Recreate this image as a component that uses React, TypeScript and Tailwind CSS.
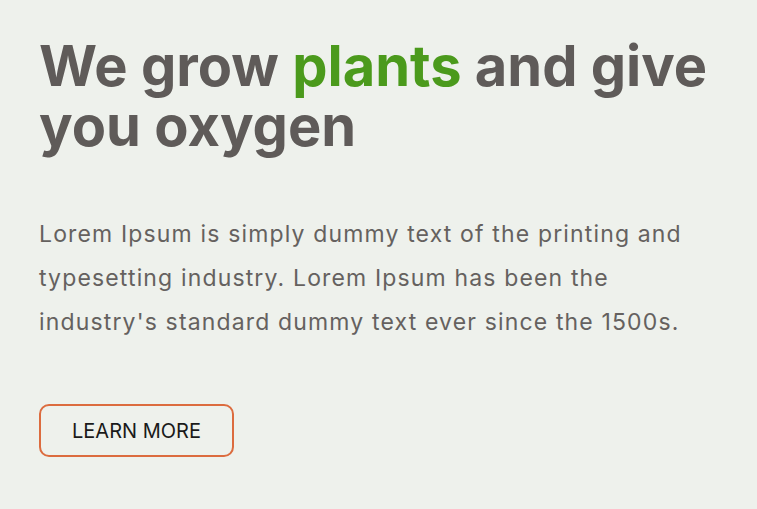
export default function App() {
  return (
    <div className="min-h-[509px] w-full bg-[#eef1ec] px-[39px] pt-[36px]" style={{ fontFamily: "Inter, 'Noto Sans', sans-serif" }}>
      <h1 className="text-[56px] font-bold leading-[60px] text-[#5f5b59]">
        We grow <span className="text-[#4b9a1c]">plants</span> and give you oxygen
      </h1>
      <p className="mt-[56px] max-w-[660px] text-[23px] leading-[44px] tracking-[1.15px] text-[#65615f]">
        Lorem Ipsum is simply dummy text of the printing and typesetting industry. Lorem Ipsum has been the industry's standard dummy text ever since the 1500s.
      </p>
      <button className="mt-[60px] h-[53px] w-[195px] rounded-[10px] border-2 border-[#dc6c3f] text-[20px] text-[#1a1a1a]">
        LEARN MORE
      </button>
    </div>
  );
}
